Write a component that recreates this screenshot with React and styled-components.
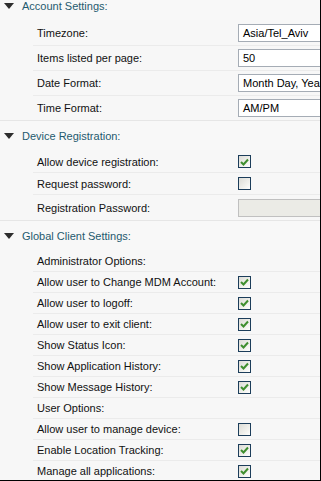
import React from "react";
import styled, { createGlobalStyle } from "styled-components";

const Global = createGlobalStyle`
  html, body { margin: 0; padding: 0; background: #ffffff; }
  body { font-family: Tahoma, "Liberation Sans", Arial, sans-serif; font-size: 11px; color: #000; }
`;

const Frame = styled.div`
  width: 320px;
  height: 480px;
  overflow: hidden;
  background: #f7f7f7;
  border-right: 1px solid #000;
  border-bottom: 1px solid #000;
  box-sizing: content-box;
`;

const Scroller = styled.div`
  margin-top: -10px;
  display: flex;
  flex-direction: column;
`;

const Section = styled.section`
  display: flex;
  flex-direction: column;
  border-top: 1px solid #e6e6e6;
`;

const Header = styled.div`
  height: 29px;
  display: flex;
  align-items: center;
  gap: 8px;
  padding-left: 4px;
  color: #1f5a6e;
  font-size: 11px;
  background: #f8f8f8;
`;

const Rows = styled.div`
  display: flex;
  flex-direction: column;
`;

const Row = styled.div`
  display: grid;
  grid-template-columns: 205px 1fr;
  align-items: center;
  height: ${(p) => p.$h}px;
  margin-left: 33px;
  border-top: 1px solid ${(p) => (p.$first ? "transparent" : "#ebebeb")};
  box-sizing: border-box;
`;

const Label = styled.span`
  padding-left: 4px;
  white-space: nowrap;
  color: #111;
`;

const Input = styled.div`
  height: 18px;
  box-sizing: border-box;
  border: 1px solid #a5acb5;
  border-right: none;
  background: ${(p) => (p.$disabled ? "#ebebe6" : "#ffffff")};
  ${(p) => p.$disabled && "border-color: #c0c0c0;"}
  display: flex;
  align-items: center;
  padding-left: 4px;
  white-space: nowrap;
  overflow: hidden;
  color: #000;
`;

const Box = styled.span`
  width: 13px;
  height: 13px;
  box-sizing: border-box;
  border: 1px solid #1c3d5a;
  background: linear-gradient(135deg, #dcdcd6 0%, #f4f4f0 70%, #ffffff 100%);
  display: flex;
  align-items: center;
  justify-content: center;
`;

const Triangle = () => (
  <svg width="10" height="6" viewBox="0 0 10 6">
    <path d="M0 0 L10 0 L5 6 Z" fill="#2e2e2e" />
  </svg>
);

const Checkbox = ({ checked }) => (
  <Box>
    {checked && (
      <svg width="9" height="8" viewBox="0 0 9 8">
        <path d="M1 4 L3.5 6.5 L8 1.5" stroke="#3f8f2f" strokeWidth="2" fill="none" />
      </svg>
    )}
  </Box>
);

const sections = [
  {
    title: "Account Settings:",
    h: 25,
    rows: [
      { label: "Timezone:", input: "Asia/Tel_Aviv" },
      { label: "Items listed per page:", input: "50" },
      { label: "Date Format:", input: "Month Day, Year" },
      { label: "Time Format:", input: "AM/PM" },
    ],
  },
  {
    title: "Device Registration:",
    h: 22,
    rows: [
      { label: "Allow device registration:", check: true },
      { label: "Request password:", check: false },
      { label: "Registration Password:", disabled: true, h: 26 },
    ],
  },
  {
    title: "Global Client Settings:",
    h: 21,
    rows: [
      { label: "Administrator Options:" },
      { label: "Allow user to Change MDM Account:", check: true },
      { label: "Allow user to logoff:", check: true },
      { label: "Allow user to exit client:", check: true },
      { label: "Show Status Icon:", check: true },
      { label: "Show Application History:", check: true },
      { label: "Show Message History:", check: true },
      { label: "User Options:" },
      { label: "Allow user to manage device:", check: false },
      { label: "Enable Location Tracking:", check: true },
      { label: "Manage all applications:", check: true },
    ],
  },
];

export default function App() {
  return (
    <>
      <Global />
      <Frame>
        <Scroller>
          {sections.map((s) => (
            <Section key={s.title}>
              <Header>
                <Triangle />
                <span>{s.title}</span>
              </Header>
              <Rows>
                {s.rows.map((r, i) => (
                  <Row key={r.label} $h={r.h || s.h} $first={i === 0}>
                    <Label>{r.label}</Label>
                    <div>
                      {r.input !== undefined && <Input>{r.input}</Input>}
                      {r.disabled && <Input $disabled />}
                      {r.check !== undefined && <Checkbox checked={r.check} />}
                    </div>
                  </Row>
                ))}
              </Rows>
            </Section>
          ))}
        </Scroller>
      </Frame>
    </>
  );
}
